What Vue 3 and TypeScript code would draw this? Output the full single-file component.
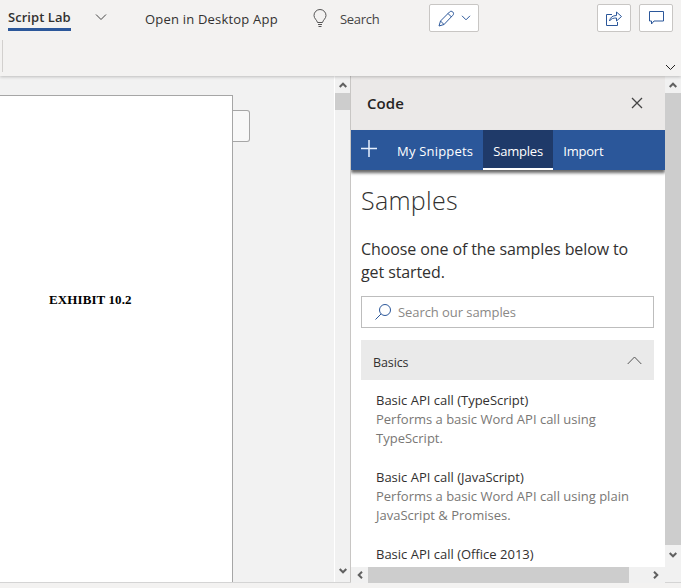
<script setup lang="ts">
interface Sample {
  title: string
  lines: string[]
}

const tabs = ['My Snippets', 'Samples', 'Import']

const samples: Sample[] = [
  { title: 'Basic API call (TypeScript)', lines: ['Performs a basic Word API call using', 'TypeScript.'] },
  { title: 'Basic API call (JavaScript)', lines: ['Performs a basic Word API call using plain', 'JavaScript & Promises.'] },
  { title: 'Basic API call (Office 2013)', lines: [] }
]
</script>

<template>
  <div class="app">
    <header class="ribbon">
      <div class="ribbon-top">
        <div class="ribbon-tab">Script Lab</div>
        <svg class="tab-chevron" width="12" height="8" viewBox="0 0 12 8"><path d="M1 1.500l5 5 5-5" /></svg>
        <span class="ribbon-link">Open in Desktop App</span>
        <svg class="bulb" width="14" height="20" viewBox="0 0 14 20">
          <path d="M4.500 13.500C4 11 1 9.500 1 6.500a6 6 0 0 1 12 0c0 3-3 4.500-3.500 7zM5 15.500h4M5.500 17.500h3" />
        </svg>
        <span class="ribbon-search">Search</span>
        <button class="edit-btn">
          <svg width="17" height="17" viewBox="0 0 17 17"><path d="M1 16l1.500-5L11.500 2c1-1 2.300-1 3.300 0s1 2.300 0 3.300L6 14.500zM2.500 11l3.500 3.500M10 3.500l3.500 3.500" /></svg>
          <svg width="10" height="6" viewBox="0 0 10 6"><path d="M1 .8l4 4 4-4" /></svg>
        </button>
        <button class="icon-btn share-btn">
          <svg width="16" height="15" viewBox="0 0 16 15"><path d="M6 3.500H.5v11h11V11M3.500 10c.5-3.500 3-5.500 7-5.500V1L15.500 5.500l-5 4.500V7c-3 0-5.500 .5-7 3z" /></svg>
        </button>
        <button class="icon-btn">
          <svg width="15" height="14" viewBox="0 0 15 14"><path d="M.5 .5h14v9.500H5l-2.500 3v-3h-2z" /></svg>
        </button>
      </div>
      <div class="ribbon-bottom">
        <span class="ribbon-sep"></span>
        <svg class="ribbon-expand" width="11" height="7" viewBox="0 0 11 7"><path d="M1 1l4.500 4.500L10 1" /></svg>
      </div>
    </header>

    <main class="workspace">
      <section class="doc-area">
        <div class="doc-page"><p class="doc-title">EXHIBIT 10.2</p></div>
        <div class="doc-flag"></div>
      </section>

      <div class="vscroll doc-scroll">
        <svg class="arrow" width="8" height="6" viewBox="0 0 8 6"><path d="M.7 5L4 1.700 7.300 5" /></svg>
        <span class="doc-thumb"></span>
        <span class="spacer"></span>
        <svg class="arrow flip" width="8" height="6" viewBox="0 0 8 6"><path d="M.7 5L4 1.700 7.300 5" /></svg>
      </div>

      <aside class="pane">
        <div class="pane-head">
          <span class="pane-title">Code</span>
          <svg width="12" height="12" viewBox="0 0 12 12"><path d="M1 1l10 10M11 1L1 11" /></svg>
        </div>
        <nav class="pane-nav">
          <svg class="plus" width="16" height="17" viewBox="0 0 16 17"><path d="M8 0v17M0 8.500h16" /></svg>
          <span v-for="tab in tabs" :key="tab" class="nav-tab" :class="{ active: tab === 'Samples' }">{{ tab }}</span>
        </nav>
        <div class="pane-body">
          <h1>Samples</h1>
          <p class="intro">Choose one of the samples below to<br />get started.</p>
          <div class="search-box">
            <svg width="18" height="18" viewBox="0 0 18 18"><circle cx="11" cy="7" r="5.500" /><path d="M7 11l-5.500 5.500" /></svg>
            <span>Search our samples</span>
          </div>
          <div class="group-head">
            <span>Basics</span>
            <svg width="15" height="9" viewBox="0 0 15 9"><path d="M.7 8l6.800-7 6.800 7" /></svg>
          </div>
          <div v-for="sample in samples" :key="sample.title" class="sample">
            <div class="sample-title">{{ sample.title }}</div>
            <div v-for="line in sample.lines" :key="line" class="sample-desc">{{ line }}</div>
          </div>
        </div>
        <div class="hscroll">
          <svg class="harrow" width="6" height="8" viewBox="0 0 6 8"><path d="M5 .7L1.700 4 5 7.300" /></svg>
          <span class="hthumb"></span>
          <span class="spacer"></span>
          <svg class="harrow right" width="6" height="8" viewBox="0 0 6 8"><path d="M1 .7L4.300 4 1 7.300" /></svg>
        </div>
      </aside>

      <div class="vscroll pane-scroll">
        <svg class="arrow" width="8" height="6" viewBox="0 0 8 6"><path d="M.7 5L4 1.700 7.300 5" /></svg>
        <span class="pane-thumb"></span>
        <span class="spacer"></span>
        <svg class="arrow flip" width="8" height="6" viewBox="0 0 8 6"><path d="M.7 5L4 1.700 7.300 5" /></svg>
      </div>
    </main>
    <div class="status"></div>
  </div>
</template>

<style>
html,
body {
  margin: 0;
  overflow: hidden;
}
</style>

<style scoped>
.app {
  width: 681px;
  height: 588px;
  display: flex;
  flex-direction: column;
  overflow: hidden;
  background: #f3f2f1;
  font-family: "Open Sans", "Noto Sans", sans-serif;
  color: #323130;
}

svg {
  fill: none;
  stroke: currentColor;
  flex: none;
}

.ribbon {
  height: 76px;
  flex: none;
  background: #f3f2f1;
  box-shadow: 0 1px 3px rgba(0, 0, 0, 0.22);
  position: relative;
  z-index: 2;
}

.ribbon-top {
  height: 40px;
  display: flex;
  align-items: flex-start;
  padding-left: 8px;
}

.ribbon-tab {
  width: 63px;
  height: 19px;
  margin-top: 9px;
  border-bottom: 3px solid #2b579a;
  font-size: 13px;
  font-weight: 600;
  line-height: 17px;
  white-space: nowrap;
  letter-spacing: 0.05px;
}

.tab-chevron {
  margin: 13px 0 0 24px;
  color: #444;
}

.ribbon-link {
  margin: 10px 0 0 38px;
  font-size: 13px;
  line-height: 18px;
  letter-spacing: 0.2px;
  white-space: nowrap;
  width: 135px;
}

.bulb {
  margin: 9px 0 0 33px;
  color: #555;
}

.ribbon-search {
  margin: 10px 0 0 13px;
  width: 40px;
  font-size: 13px;
  line-height: 18px;
  letter-spacing: -0.3px;
  color: #444;
}

.edit-btn,
.icon-btn {
  height: 28px;
  margin-top: 4px;
  padding: 0;
  display: flex;
  align-items: center;
  justify-content: center;
  background: #fff;
  border: 1px solid #c8c6c4;
  border-radius: 2px;
  color: #2b579a;
}

.edit-btn {
  width: 50px;
  gap: 6px;
  margin-left: 49px;
}

.icon-btn {
  width: 34px;
  margin-left: 8px;
}

.share-btn {
  margin-left: 118px;
}

.ribbon-bottom {
  height: 36px;
  display: flex;
  align-items: flex-start;
  justify-content: space-between;
  position: relative;
}

.ribbon-sep {
  width: 1px;
  height: 32px;
  margin-left: 2px;
  background: #d2d0ce;
}

.ribbon-expand {
  margin: 24px 5px 0 0;
  color: #222;
}

.workspace {
  flex: 1;
  min-height: 0;
  display: flex;
}

.doc-area {
  flex: 1;
  min-width: 0;
  display: flex;
  align-items: flex-start;
  padding-top: 19px;
  background: #f2f2f2;
}

.doc-page {
  width: 233px;
  height: 600px;
  box-sizing: border-box;
  flex: none;
  background: #fff;
  border: 1px solid #a6a6a6;
  border-left: 0;
}

.doc-title {
  margin: 195px 0 0 49px;
  font-family: "Liberation Serif", serif;
  font-size: 13px;
  font-weight: 700;
  line-height: 18px;
  letter-spacing: 0.1px;
  color: #000;
}

.doc-flag {
  width: 17px;
  height: 32px;
  margin-top: 15px;
  box-sizing: border-box;
  background: #f8f8f8;
  border: 1px solid #a6a6a6;
  border-left: 0;
  border-radius: 0 3px 3px 0;
}

.vscroll {
  width: 16px;
  flex: none;
  box-sizing: border-box;
  height: 507px;
  display: flex;
  flex-direction: column;
  align-items: stretch;
  background: #f1f1f1;
}

.doc-scroll {
  border-left: 1px solid #fff;
  padding-bottom: 4px;
}

.pane-scroll {
  padding-bottom: 20px;
}

.spacer {
  flex: 1;
}

.arrow {
  align-self: center;
  margin: 6px 0 5px;
  stroke-width: 2;
  color: #606060;
}

.arrow.flip {
  transform: rotate(180deg);
}

.doc-thumb {
  height: 17px;
  background: #cdcdcd;
}

.pane-thumb {
  height: 452px;
  background: #cdcdcd;
}

.pane {
  width: 315px;
  flex: none;
  height: 507px;
  box-sizing: border-box;
  border-left: 1px solid #c8c6c4;
  display: flex;
  flex-direction: column;
  background: #fff;
  overflow: hidden;
}

.pane-head {
  height: 54px;
  flex: none;
  display: flex;
  align-items: center;
  justify-content: space-between;
  padding: 0 22px 0 16px;
  background: #ebe9e8;
}

.pane-head svg {
  color: #444;
  stroke-width: 1.300;
}

.pane-title {
  font-size: 15px;
  font-weight: 600;
  letter-spacing: 0.1px;
  color: #252423;
}

.pane-nav {
  height: 40px;
  flex: none;
  display: flex;
  align-items: stretch;
  background: #2b579a;
  color: #fff;
  box-shadow: 0 3px 3px rgba(0, 0, 0, 0.6);
  position: relative;
}

.plus {
  margin: 10px 10px 0 10px;
  stroke-width: 1.500;
  color: #e8f1ff;
}

.nav-tab {
  padding: 0 10px;
  font-size: 13px;
  line-height: 42px;
  letter-spacing: -0.2px;
  white-space: nowrap;
}

.nav-tab:first-of-type {
  letter-spacing: 0.2px;
}

.nav-tab.active {
  width: 70px;
  box-sizing: border-box;
  background: #1f3a69;
  border-bottom: 2px solid #fff;
}

.pane-body {
  flex: 1;
  min-height: 0;
  padding: 0 11px 0 10px;
  overflow: hidden;
}

h1 {
  margin: 11px 0 0;
  font-size: 25px;
  font-weight: 300;
  line-height: 38px;
  letter-spacing: 0.3px;
  color: #323130;
}

.intro {
  margin: 19px 0 0;
  font-size: 16px;
  font-weight: 400;
  line-height: 23px;
  letter-spacing: -0.1px;
  color: #323130;
}

.search-box {
  height: 32px;
  box-sizing: border-box;
  margin-top: 12px;
  display: flex;
  align-items: center;
  gap: 6px;
  padding-left: 12px;
  border: 1px solid #bdbdbd;
  color: #2b579a;
}

.search-box span {
  font-size: 13px;
  letter-spacing: -0.07px;
  color: #8a8886;
}

.group-head {
  height: 40px;
  box-sizing: border-box;
  margin-top: 12px;
  display: flex;
  align-items: center;
  justify-content: space-between;
  padding: 5px 12px 0;
  background: #eaeaea;
  font-size: 12.500px;
  letter-spacing: -0.1px;
}

.group-head svg {
  margin-top: -5px;
  color: #555;
}

.sample {
  padding: 11px 15px 0;
  margin-bottom: 9px;
  font-size: 13px;
  line-height: 19px;
  letter-spacing: 0;
  white-space: nowrap;
}

.sample-desc {
  color: #797775;
}

.hscroll {
  height: 16px;
  flex: none;
  display: flex;
  align-items: center;
  background: #f1f1f1;
  position: relative;
}

.harrow {
  margin: 0 5px 0 6px;
  stroke-width: 2;
  color: #606060;
}

.harrow.right {
  margin: 0 6px 0 0;
}

.hthumb {
  width: 261px;
  height: 16px;
  background: #cdcdcd;
}

.status {
  height: 5px;
  flex: none;
  border-top: 1px solid #d4d4d4;
  background: #f3f2f1;
}
</style>
